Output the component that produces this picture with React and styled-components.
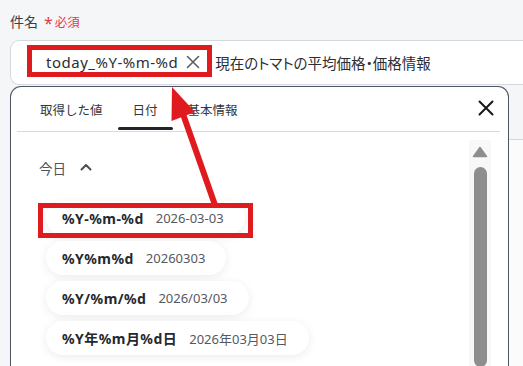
import React from "react";
import styled, { createGlobalStyle } from "styled-components";

const GlobalStyle = createGlobalStyle`
  html, body { margin: 0; padding: 0; }
  body {
    background: #f5f6f8;
    font-family: "Noto Sans", "Noto Sans CJK JP", sans-serif;
    color: #2b2e33;
    width: 523px;
    height: 366px;
    overflow: hidden;
  }
`;

const Page = styled.div`
  position: relative;
  width: 523px;
  height: 366px;
  overflow: hidden;
  padding: 11px 0 0 10px;
  box-sizing: border-box;
`;

const LabelRow = styled.div`
  display: flex;
  align-items: center;
  gap: 4px;
  height: 20px;
  font-size: 14px;
  color: #3d4046;
`;

const Required = styled.span`
  color: #e5384f;
  font-size: 12.5px;
  display: flex;
  align-items: center;
  gap: 2px;
  margin-left: 2px;
`;

const Star = styled.span`
  font-size: 16px;
  line-height: 1;
  margin-top: 3px;
`;

const InputBox = styled.div`
  margin-top: 9px;
  height: 43px;
  background: #fff;
  border: 1px solid #d4d8df;
  border-right: none;
  border-radius: 9px 0 0 9px;
  display: flex;
  align-items: center;
  padding-left: 35px;
  gap: 6px;
`;

const Chip = styled.div`
  display: flex;
  align-items: center;
  gap: 8px;
  font-size: 15px;
  letter-spacing: 0.5px;
  color: #2b2e33;
  margin-top: -1px;
`;

const ChipText = styled.span``;

const InputText = styled.span`
  font-size: 14.5px;
  color: #2b2e33;
  margin-left: 9px;
  margin-top: -1px;
  font-feature-settings: "palt";
`;

const Lower = styled.div`
  display: flex;
  margin-top: 1px;
  height: 290px;
`;

const Panel = styled.div`
  width: 499px;
  flex: none;
  box-sizing: border-box;
  background: #fff;
  border: 1px solid #4d5562;
  border-bottom: none;
  border-radius: 11px 11px 0 0;
  display: flex;
  flex-direction: column;
`;

const Side = styled.div`
  flex: 1;
  margin-top: 53px;
  border-top: 1px solid #d4d8df;
  background: #fbfbfc;
`;

const TabBar = styled.div`
  display: flex;
  align-items: flex-end;
  margin: 0 8px 0 6px;
  padding-left: 8px;
  height: 44px;
  border-bottom: 1px solid #d6d9df;
  position: relative;
`;

const Tab = styled.div`
  position: relative;
  padding: 0 15px;
  height: 44px;
  display: flex;
  align-items: center;
  font-size: 12.5px;
  color: #33363b;
  &::after {
    content: "";
    display: ${(p) => (p.$active ? "block" : "none")};
    position: absolute;
    left: 0;
    right: 0;
    bottom: 1px;
    height: 3px;
    border-radius: 2px;
    background: #22262c;
  }
`;

const CloseBtn = styled.div`
  margin-left: auto;
  width: 24px;
  height: 44px;
  display: flex;
  align-items: center;
  justify-content: center;
  margin-right: 2px;
  margin-bottom: 1px;
`;

const Body = styled.div`
  display: flex;
  flex: 1;
  min-height: 0;
`;

const List = styled.div`
  flex: 1;
  padding: 24px 0 0 28px;
  display: flex;
  flex-direction: column;
  align-items: flex-start;
`;

const SectionHead = styled.div`
  display: flex;
  align-items: center;
  gap: 14px;
  font-size: 13.5px;
  color: #50545b;
  height: 24px;
  margin-bottom: 21px;
`;

const Items = styled.div`
  display: flex;
  flex-direction: column;
  align-items: flex-start;
  gap: 6px;
  padding-left: 7px;
`;

const Pill = styled.div`
  height: 34px;
  display: flex;
  align-items: center;
  gap: 12px;
  padding: 0 21px 0 16px;
  background: #fff;
  border-radius: 17px;
  box-shadow: 0 2px 10px rgba(0, 0, 0, 0.08);
`;

const Code = styled.span`
  font-weight: 700;
  font-size: 14px;
  color: #25282d;
  letter-spacing: 0.45px;
`;

const DateText = styled.span`
  font-size: 13px;
  color: #55595f;
`;

const Scroll = styled.div`
  width: 22px;
  margin-right: 17px;
  margin-top: 8px;
  background: #f8f8f8;
  display: flex;
  flex-direction: column;
  align-items: center;
`;

const Thumb = styled.div`
  width: 13px;
  height: 200px;
  margin-top: 9px;
  border-radius: 7px;
  background: #8e8e8e;
`;

const RedBox = styled.div`
  position: absolute;
  border: 5px solid #e01b20;
  box-sizing: border-box;
  pointer-events: none;
`;

const Overlay = styled.svg`
  position: absolute;
  left: 0;
  top: 0;
  pointer-events: none;
`;

const items = [
  ["%Y-%m-%d", "2026-03-03"],
  ["%Y%m%d", "20260303"],
  ["%Y/%m/%d", "2026/03/03"],
  ["%Y年%m月%d日", "2026年03月03日"],
];

export default function App() {
  return (
    <>
      <GlobalStyle />
      <Page>
        <LabelRow>
          件名
          <Required>
            <Star>*</Star>必須
          </Required>
        </LabelRow>
        <InputBox>
          <Chip>
            <ChipText>today_%Y-%m-%d</ChipText>
            <svg width="14" height="14" viewBox="0 0 14 14">
              <path d="M1.5 1.5 L12.5 12.5 M12.5 1.5 L1.5 12.5" stroke="#5a5e65" strokeWidth="1.6" strokeLinecap="round" />
            </svg>
          </Chip>
          <InputText>現在のトマトの平均価格・価格情報</InputText>
        </InputBox>
        <Lower>
          <Panel>
            <TabBar>
              <Tab>取得した値</Tab>
              <Tab $active>日付</Tab>
              <Tab>基本情報</Tab>
              <CloseBtn>
                <svg width="16" height="16" viewBox="0 0 16 16">
                  <path d="M1.5 1.5 L14.5 14.5 M14.5 1.5 L1.5 14.5" stroke="#16181b" strokeWidth="2" strokeLinecap="round" />
                </svg>
              </CloseBtn>
            </TabBar>
            <Body>
              <List>
                <SectionHead>
                  今日
                  <svg width="12" height="8" viewBox="0 0 12 8" style={{ marginTop: -3 }}>
                    <path d="M1.5 6.5 L6 2 L10.5 6.5" stroke="#4b4f56" strokeWidth="2" fill="none" strokeLinecap="round" strokeLinejoin="round" />
                  </svg>
                </SectionHead>
                <Items>
                  {items.map(([c, d]) => (
                    <Pill key={c}>
                      <Code>{c}</Code>
                      <DateText>{d}</DateText>
                    </Pill>
                  ))}
                </Items>
              </List>
              <Scroll>
                <svg width="16" height="12" viewBox="0 0 16 12" style={{ marginTop: 6 }}>
                  <path d="M8 1.5 L14.5 10.5 L1.5 10.5 Z" fill="#8e8e8e" stroke="#8e8e8e" strokeWidth="1.5" strokeLinejoin="round" />
                </svg>
                <Thumb />
              </Scroll>
            </Body>
          </Panel>
          <Side />
        </Lower>
        <RedBox style={{ left: 27, top: 45, width: 185, height: 32 }} />
        <RedBox style={{ left: 38, top: 203, width: 215, height: 35 }} />
        <Overlay width="523" height="366" viewBox="0 0 523 366">
          <line x1="215" y1="205" x2="183" y2="114" stroke="#e01b20" strokeWidth="6" />
          <polygon points="172,87 171.5,121 195,112" fill="#e01b20" />
        </Overlay>
      </Page>
    </>
  );
}
